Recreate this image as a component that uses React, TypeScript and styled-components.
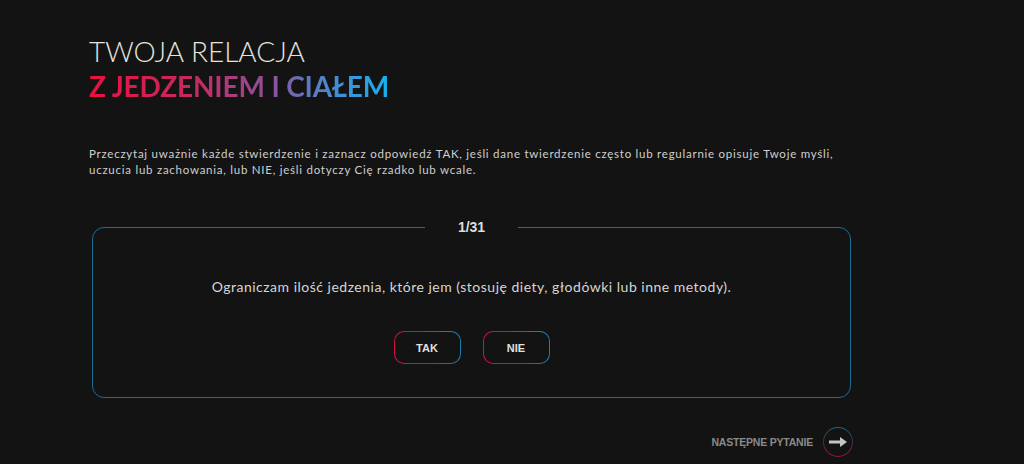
import React from "react";
import styled, { createGlobalStyle } from "styled-components";

const Global = createGlobalStyle`
  html, body { margin: 0; padding: 0; background: #131313; }
  body { font-family: Lato, "Noto Sans", sans-serif; color: #d8d8d8; }
  * { box-sizing: border-box; }
`;

const Page = styled.main`
  width: 1024px;
  height: 464px;
  overflow: hidden;
  padding: 34px 0 0 89px;
  display: flex;
  flex-direction: column;
`;

const Title = styled.h1`
  margin: 0;
  font-family: Lato, sans-serif;
  font-size: 28px;
  line-height: 35px;
  font-weight: 300;
  color: #e6e4dc;
`;

const TitleLine = styled.span<{ $accent?: boolean }>`
  display: block;
  width: max-content;
  font-weight: ${(p) => (p.$accent ? 700 : 300)};
  letter-spacing: ${(p) => (p.$accent ? "-0.15px" : "0px")};
  ${(p) =>
    p.$accent
      ? `background: linear-gradient(90deg, #e8123d 0%, #c42a62 35%, #8e4f98 60%, #5a7cc4 75%, #16b1ee 100%);
         -webkit-background-clip: text; background-clip: text; color: transparent;`
      : ""}
`;

const Intro = styled.p`
  margin: 42px 0 0 0;
  width: 750px;
  font-family: Lato, sans-serif;
  font-size: 11.5px;
  line-height: 16px;
  letter-spacing: 0.75px;
  color: #cfcfcf;
`;

const Card = styled.fieldset`
  margin: 41px 0 0 3px;
  width: 759px;
  height: 179px;
  border: 1.5px solid #1b7090;
  border-radius: 12px;
  padding: 0;
  display: flex;
  flex-direction: column;
  align-items: center;
`;

const Counter = styled.legend`
  margin: 0 auto;
  padding: 0 33px;
  font-family: "Liberation Sans", Arial, sans-serif;
  font-weight: 700;
  font-size: 14px;
  line-height: 16px;
  color: #dcdcdc;
`;

const Question = styled.p`
  margin: 43px 0 0 0;
  font-family: Lato, sans-serif;
  font-size: 14px;
  line-height: 18px;
  letter-spacing: 0.5px;
  color: #d6d6d6;
`;

const Answers = styled.div`
  margin-top: 35px;
  display: flex;
  gap: 22px;
`;

const AnswerButton = styled.button`
  width: 67px;
  height: 33px;
  border-radius: 10px;
  border: 1.5px solid transparent;
  background: linear-gradient(#131313, #131313) padding-box,
    linear-gradient(70deg, #d3123e 15%, #8a2f70 50%, #1b7fae 85%) border-box;
  font-family: "Liberation Sans", Arial, sans-serif;
  font-weight: 700;
  font-size: 11px;
  color: #e0e0e0;
  cursor: pointer;
  padding: 0;
`;

const Footer = styled.div`
  width: 764px;
  margin-top: 29px;
  display: flex;
  justify-content: flex-end;
  align-items: center;
  gap: 10px;
`;

const NextLabel = styled.span`
  font-family: "Liberation Sans", Arial, sans-serif;
  font-weight: 700;
  font-size: 10.5px;
  letter-spacing: -0.2px;
  color: #8a8a8a;
`;

const NextButton = styled.button`
  width: 30px;
  height: 30px;
  border-radius: 50%;
  border: 1.5px solid transparent;
  background: linear-gradient(#131313, #131313) padding-box,
    linear-gradient(180deg, #1d6586 0%, #3a3346 50%, #a8123a 100%) border-box;
  padding: 0;
  display: flex;
  align-items: center;
  justify-content: center;
  cursor: pointer;
`;

const Arrow = () => (
  <svg width="20" height="12" viewBox="0 0 20 12">
    <path d="M1 6 H14" stroke="#c4c4c4" strokeWidth="3" strokeLinecap="butt" />
    <path d="M12 1 L19 6 L12 11 Z" fill="#c4c4c4" />
  </svg>
);

export default function App() {
  return (
    <>
      <Global />
      <Page>
        <Title>
          <TitleLine>TWOJA RELACJA</TitleLine>
          <TitleLine $accent>Z JEDZENIEM I CIAŁEM</TitleLine>
        </Title>
        <Intro>
          Przeczytaj uważnie każde stwierdzenie i zaznacz odpowiedź TAK, jeśli dane twierdzenie często lub
          regularnie opisuje Twoje myśli, uczucia lub zachowania, lub NIE, jeśli dotyczy Cię rzadko lub wcale.
        </Intro>
        <Card>
          <Counter>1/31</Counter>
          <Question>Ograniczam ilość jedzenia, które jem (stosuję diety, głodówki lub inne metody).</Question>
          <Answers>
            <AnswerButton>TAK</AnswerButton>
            <AnswerButton>NIE</AnswerButton>
          </Answers>
        </Card>
        <Footer>
          <NextLabel>NASTĘPNE PYTANIE</NextLabel>
          <NextButton aria-label="Następne pytanie">
            <Arrow />
          </NextButton>
        </Footer>
      </Page>
    </>
  );
}
